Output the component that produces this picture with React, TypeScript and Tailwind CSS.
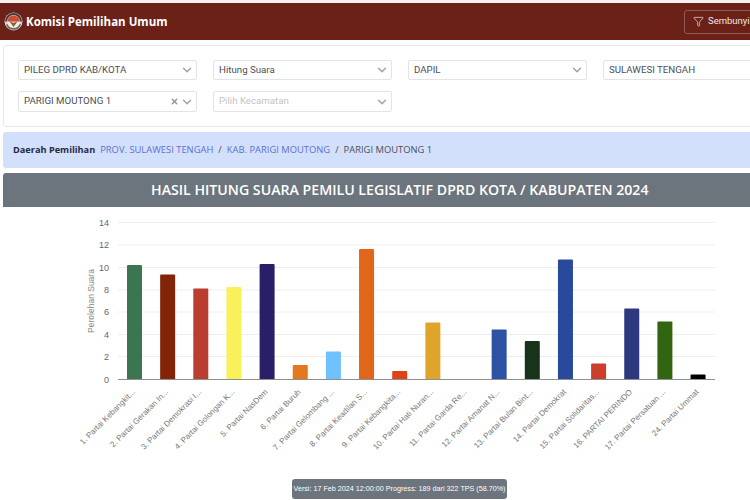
import { ChevronDown, Filter, X } from "lucide-react";

const FONT = "font-['Open_Sans','Noto_Sans',sans-serif]";

type Party = { label: string; top: number; color: string };

const PARTIES: Party[] = [
  { label: "1. Partai Kebangkit...", top: 265, color: "#3c7650" },
  { label: "2. Partai Gerakan In...", top: 274.5, color: "#832408" },
  { label: "3. Partai Demokrasi I...", top: 288.5, color: "#bb3d2f" },
  { label: "4. Partai Golongan K...", top: 287, color: "#f9f159" },
  { label: "5. Partai NasDem", top: 264, color: "#291f66" },
  { label: "6. Partai Buruh", top: 365, color: "#e3781f" },
  { label: "7. Partai Gelombang ...", top: 351.5, color: "#6ec1fd" },
  { label: "8. Partai Keadilan S...", top: 249, color: "#e0661a" },
  { label: "9. Partai Kebangkita...", top: 371, color: "#dd4319" },
  { label: "10. Partai Hati Nuran...", top: 322.5, color: "#dfa52a" },
  { label: "11. Partai Garda Re...", top: 379.5, color: "#cc2222" },
  { label: "12. Partai Amanat N...", top: 329.5, color: "#2c52a4" },
  { label: "13. Partai Bulan Bint...", top: 341, color: "#17331b" },
  { label: "14. Partai Demokrat", top: 259.5, color: "#28499c" },
  { label: "15. Partai Solidaritas...", top: 363.5, color: "#cc3f2c" },
  { label: "16. PARTAI PERINDO", top: 308.5, color: "#2d387f" },
  { label: "17. Partai Persatuan ...", top: 321.5, color: "#32650f" },
  { label: "24. Partai Ummat", top: 374.5, color: "#000000" },
];

const GRID = [
  { v: 14, y: 222.5 },
  { v: 12, y: 245 },
  { v: 10, y: 267.5 },
  { v: 8, y: 290 },
  { v: 6, y: 312 },
  { v: 4, y: 334.5 },
  { v: 2, y: 356.5 },
];

function Logo() {
  return (
    <svg width="19" height="19" viewBox="0 0 19 19" className="shrink-0">
      <circle cx="9.5" cy="9.5" r="9" fill="#d8d4cf" />
      <path d="M1 9.5a8.5 8.5 0 0 1 17 0h-2a6.5 6.5 0 0 0-13 0z" fill="#4a3a36" />
      <path d="M3.5 9.5a6 6 0 0 1 12 0z" fill="#cf4a34" />
      <path d="M3.5 10h12a6 6 0 0 1-12 0z" fill="#f3efe9" />
      <path d="M5.5 9.5l4 5.5 4-5.5-4 1.2z" fill="#9b5a2c" />
      <path d="M2 12.5a8 8 0 0 0 15 0l-1.4-.5a6.6 6.6 0 0 1-12.2 0z" fill="#6f6a66" />
    </svg>
  );
}

function Field({ value, placeholder, clearable }: { value?: string; placeholder?: string; clearable?: boolean }) {
  return (
    <div className="flex h-full w-[179px] shrink-0 items-center rounded-[2px] border border-[#e3e3e3] bg-white pl-[5px] pr-[2px] font-['Roboto',sans-serif] text-[9.7px]">
      <span className={value ? "flex-1 truncate text-[#4a4f55]" : "flex-1 truncate text-[#c4c4c4]"}>
        {value ?? placeholder}
      </span>
      {clearable && <X size={9} strokeWidth={3.5} className="mr-[1px] text-[#8f8f8f]" />}
      <ChevronDown size={14} strokeWidth={2.4} className="text-[#9aa0a6]" />
    </div>
  );
}

function Chart() {
  return (
    <svg width="750" height="293" viewBox="0 207 750 293" className="block font-['Liberation_Sans',sans-serif]">
      {GRID.map((g) => (
        <line key={g.v} x1="118" x2="715" y1={g.y} y2={g.y} stroke="#eeeeee" strokeWidth="1" />
      ))}
      {[...GRID, { v: 0, y: 379.5 }].map((g) => (
        <text key={g.v} x="109" y={g.y + 3} textAnchor="end" fontSize="9" fill="#666666">
          {g.v}
        </text>
      ))}
      <text transform="translate(94 301) rotate(-90)" textAnchor="middle" fontSize="8.5" fill="#888888">
        Perolehan Suara
      </text>
      {PARTIES.map((p, i) => {
        const cx = 134.5 + i * 33.15;
        return (
          <g key={p.label}>
            {p.top < 379 && (
              <path d={`M${cx - 7.5} 379.5V${p.top + 1}q0-1 1-1h13q1 0 1 1V379.5z`} fill={p.color} />
            )}
            <text
              transform={`translate(${cx + 1} 392.5) rotate(-45)`}
              textAnchor="end"
              fontSize="8"
              fill="#777777"
            >
              {p.label}
            </text>
          </g>
        );
      })}
      <line x1="118" x2="715" y1="379.5" y2="379.5" stroke="#8f8f8f" strokeWidth="1" />
    </svg>
  );
}

export default function App() {
  return (
    <div className={`relative h-[500px] w-[750px] overflow-hidden bg-white ${FONT}`}>
      <div className="h-[3px] bg-[#f4f1f0]" />
      <nav className="flex h-[37px] w-[800px] items-center justify-between bg-[#6c2118] pl-[4px] pr-[10px]">
        <div className="flex items-center gap-[3px]">
          <Logo />
          <span className="text-[11.5px] font-bold text-white">Komisi Pemilihan Umum</span>
        </div>
        <button className="flex h-[24px] w-[106px] items-center gap-[4px] rounded-[3px] border border-[#8d5a54] pl-[8px] font-['Roboto',sans-serif] text-[9.5px] text-[#f0e6e4]">
          <Filter size={11} strokeWidth={1.5} />
          Sembunyikan
        </button>
      </nav>

      <div className="ml-[3px] mt-[5px] w-[800px] rounded-[3px] border border-[#e8e8e8] bg-white pb-[14px] pl-[14px] pt-[14px]">
        <div className="flex flex-col gap-[11px]">
          <div className="flex h-[20px] gap-[16px]">
            <Field value="PILEG DPRD KAB/KOTA" />
            <Field value="Hitung Suara" />
            <Field value="DAPIL" />
            <Field value="SULAWESI TENGAH" />
          </div>
          <div className="flex h-[21px] gap-[16px]">
            <Field value="PARIGI MOUTONG 1" clearable />
            <Field placeholder="Pilih Kecamatan" />
          </div>
        </div>
      </div>

      <div className="ml-[3px] mt-[5px] flex h-[36px] w-[800px] items-center gap-[5px] rounded-[3px] bg-[#d3e0fc] pl-[10px] text-[9.4px]">
        <span className="text-[9.2px] font-bold text-[#1f2a44]">Daerah Pemilihan</span>
        <span className="text-[#5d6fd0]">PROV. SULAWESI TENGAH</span>
        <span className="text-[#4a4f55]">/</span>
        <span className="text-[#5d6fd0]">KAB. PARIGI MOUTONG</span>
        <span className="text-[#4a4f55]">/</span>
        <span className="text-[#4a4f55]">PARIGI MOUTONG 1</span>
      </div>

      <div className="mt-[5px]">
        <div className="ml-[3px] flex h-[34px] w-[794px] items-center rounded-t-[3px] bg-[#6c757d]">
          <h1 className="ml-[148px] whitespace-nowrap text-[14.15px] font-semibold text-white">
            HASIL HITUNG SUARA PEMILU LEGISLATIF DPRD KOTA / KABUPATEN 2024
          </h1>
        </div>
        <Chart />
      </div>

      <div className="absolute left-[292px] top-[479px] flex h-[20px] w-[215px] items-center justify-center whitespace-nowrap rounded-[3px] bg-[#6c757d] font-['Liberation_Sans',sans-serif] text-[7.2px] text-white">
        Versi: 17 Feb 2024 12:00:00 Progress: 189 dari 322 TPS (58.70%)
      </div>
    </div>
  );
}
